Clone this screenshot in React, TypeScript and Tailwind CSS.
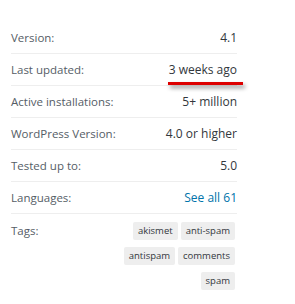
const rows: { label: string; value: string; link?: boolean; marked?: boolean }[] = [
  { label: 'Version:', value: '4.1' },
  { label: 'Last updated:', value: '3 weeks ago', marked: true },
  { label: 'Active installations:', value: '5+ million' },
  { label: 'WordPress Version:', value: '4.0 or higher' },
  { label: 'Tested up to:', value: '5.0' },
  { label: 'Languages:', value: 'See all 61', link: true },
]

const tags = ['akismet', 'anti-spam', 'antispam', 'comments', 'spam']

export default function App() {
  return (
    <div className="h-[304px] w-[295px] bg-white pl-[11px] pt-[22px] font-['Open_Sans',sans-serif] text-[#555d66]">
      <ul className="w-[226px]">
        {rows.map((row) => (
          <li
            key={row.label}
            className="flex h-[32px] items-center justify-between border-b border-[#eeeeee]"
          >
            <span className="text-[11.5px] leading-[18px]">{row.label}</span>
            <span
              className={
                row.link
                  ? 'relative text-[12px] leading-[18px] text-[#0073aa]'
                  : 'relative text-[12px] leading-[18px] text-[#32373c]'
              }
            >
              {row.value}
              {row.marked && (
                <span className="absolute top-[21px] left-[-1px] right-[-6px] h-[3px] bg-[#dd0000] shadow-[2px_3px_4px_rgba(0,0,0,0.45)]" />
              )}
            </span>
          </li>
        ))}
        <li className="flex justify-between pt-[8px]">
          <span className="text-[11.5px] leading-[18px]">Tags:</span>
          <div className="flex w-[120px] flex-wrap justify-end gap-x-[3px] gap-y-[7px] pr-[2px]">
            {tags.map((tag) => (
              <span
                key={tag}
                className="h-[18px] rounded-[2px] bg-[#eeeeee] px-[5px] text-[9.5px] leading-[18px] text-[#32373c]"
              >
                {tag}
              </span>
            ))}
          </div>
        </li>
      </ul>
    </div>
  )
}
